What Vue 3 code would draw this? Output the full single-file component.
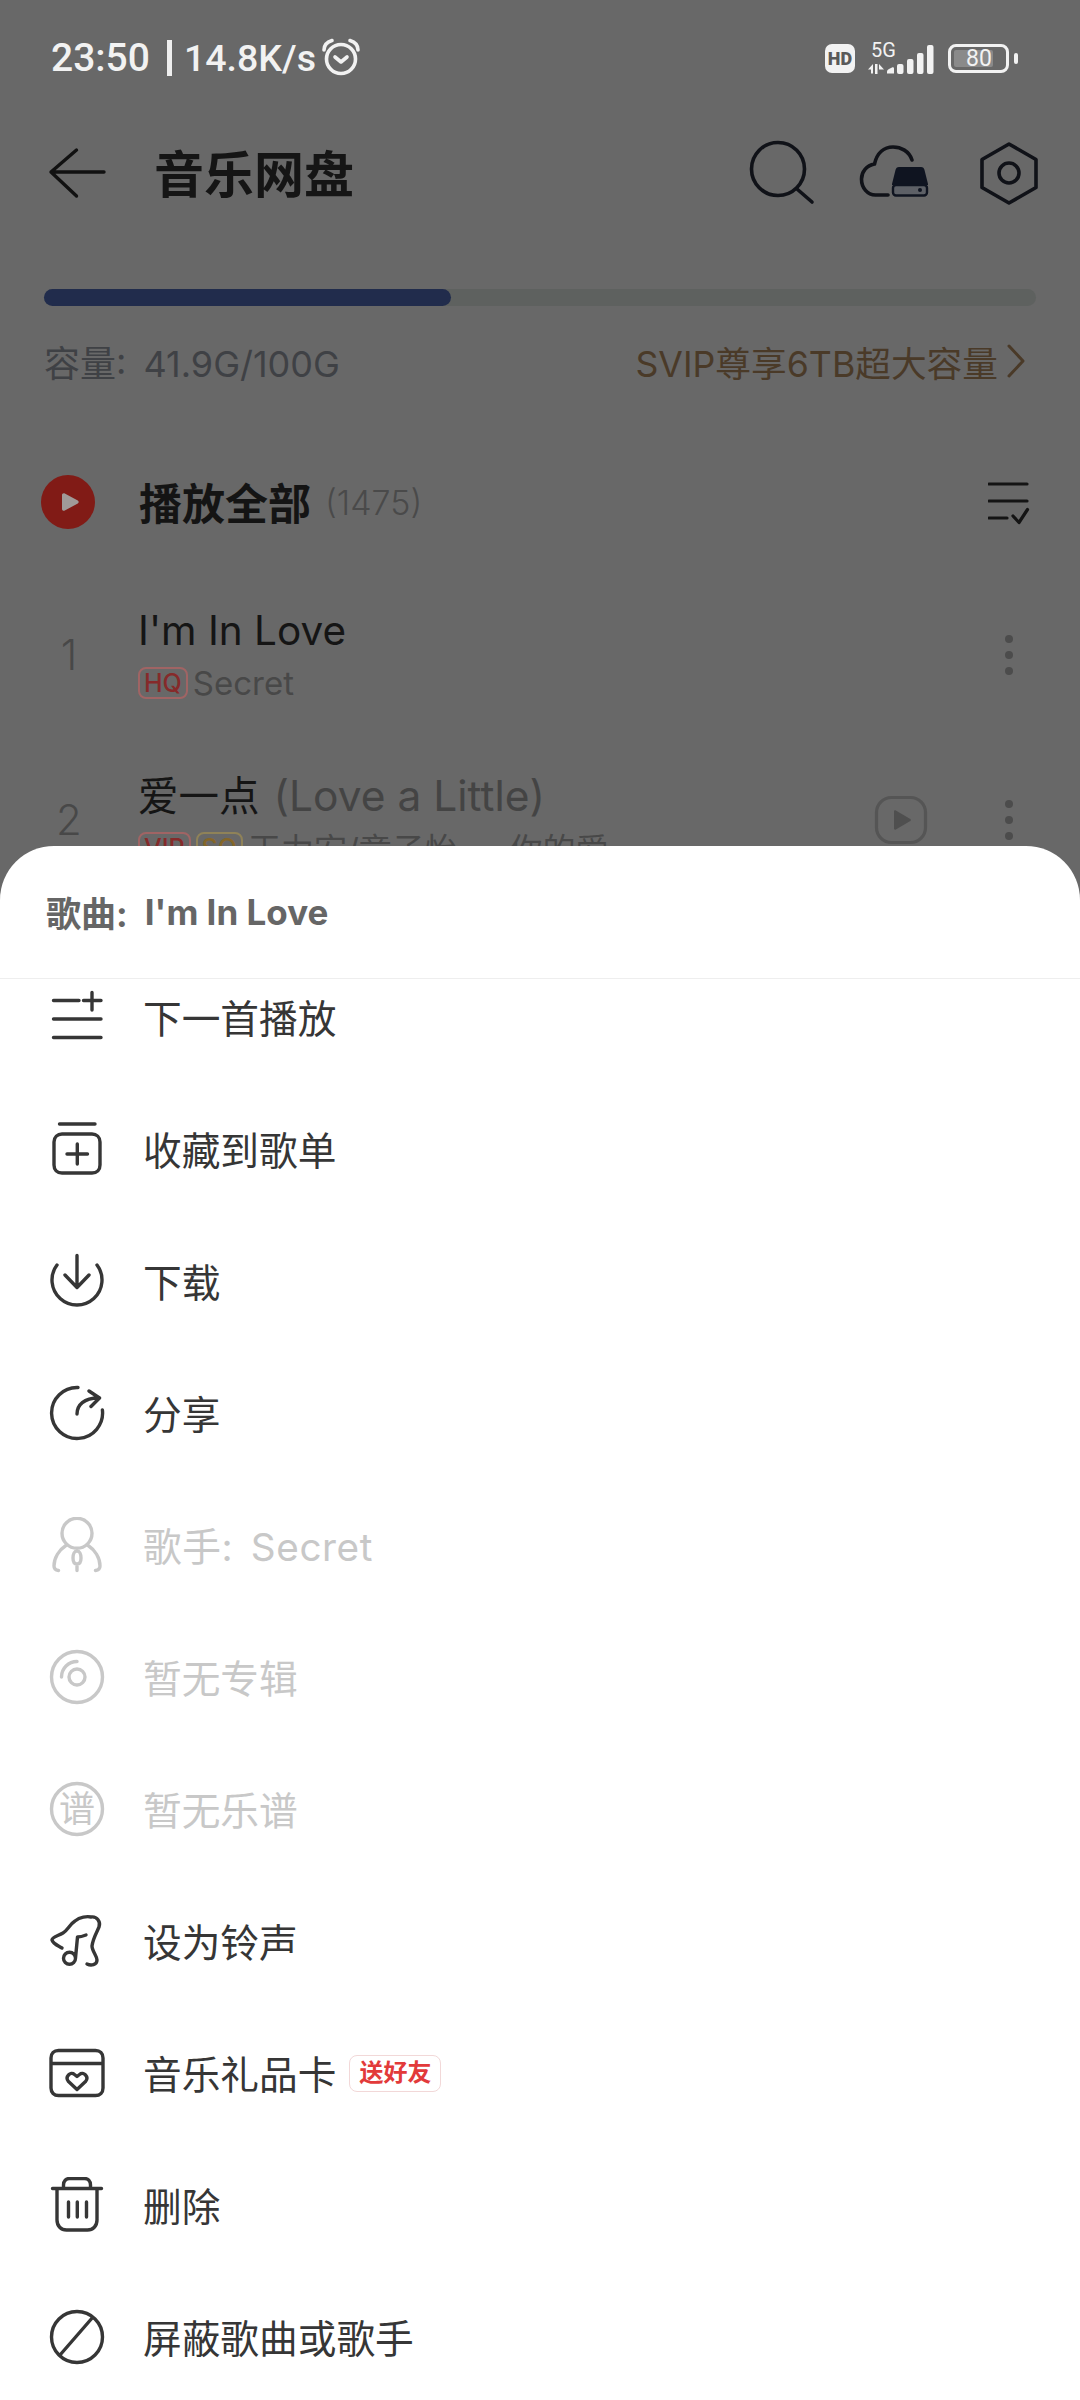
<template>
  <div class="phone">
    <div class="page">
      <!-- status bar -->
      <div class="status">
        <span class="clock">23:50</span>
        <span class="sep"></span>
        <span class="speed">14.8K/s</span>
        <svg class="alarm" viewBox="320 38 44 44" width="44" height="44" fill="none" stroke="#f2f2f2" stroke-width="3.6" stroke-linecap="round" stroke-linejoin="round">
          <circle cx="342" cy="61" r="14.5" />
          <path d="M336 59l6 5 6-5M325 52c0-5 3-8 8-9.500M359 52c0-5-3-8-8-9.500" />
        </svg>
        <div class="status-right">
          <span class="hd">HD</span>
          <svg class="signal" viewBox="865 36 70 40" width="70" height="40">
            <text x="871" y="56.500" class="net">5G</text>
            <path d="M868 69.500l5-5.500v9.500h-2v-4zM875 64h2.500v10H875zM879 64l5 5.500h-5z" fill="#f2f2f2" />
            <path d="M887 73.500v-2c0-1 1-2 2-2.500l3-1.500c1-.5 2 0 2 1v5z" fill="#f2f2f2" />
            <rect x="897" y="64" width="6.500" height="10" rx="2" fill="#f2f2f2" />
            <rect x="907" y="59" width="6.500" height="15" rx="2" fill="#f2f2f2" />
            <rect x="917" y="53" width="6.500" height="21" rx="2" fill="#f2f2f2" />
            <rect x="927" y="45" width="6.500" height="29" rx="2" fill="#f2f2f2" />
          </svg>
          <div class="battery">
            <div class="battery-fill"></div>
            <span class="battery-num">80</span>
          </div>
          <span class="battery-nub"></span>
        </div>
      </div>

      <!-- nav -->
      <div class="nav">
        <svg class="back" viewBox="48 148 60 52" width="60" height="52" fill="none" stroke="#111" stroke-width="3.400" stroke-linecap="round" stroke-linejoin="round">
          <path d="M104 173H51M76.500 151L51 173l25.500 24" />
        </svg>
        <span class="nav-title">音乐网盘</span>
        <svg class="search" viewBox="748 140 68 68" width="68" height="68" fill="none" stroke="#101218" stroke-width="3.600" stroke-linecap="round">
          <circle cx="778" cy="170" r="26.500" />
          <path d="M797 190l15 13" />
        </svg>
        <svg class="cloud" viewBox="856 140 76 60" width="76" height="60">
          <path d="M912 157c-3-9-11-13-19-13-9 0-16 6-18.500 17-8 1.500-13 8-13 15 0 9 6 16 14 16h12.500" fill="none" stroke="#101218" stroke-width="3.600" stroke-linecap="round" />
          <path d="M899 164h22c2 0 3 1 3.500 3l3.500 14v1h-36v-1l3.500-14c.5-2 1.500-3 3.500-3z" fill="#0f1420" />
          <rect x="893" y="182" width="34" height="10.500" rx="3" fill="#5d6066" stroke="#0f1420" stroke-width="2.400" />
          <circle cx="920" cy="187" r="2" fill="#0f1420" />
        </svg>
        <svg class="gear" viewBox="978 140 62 67" width="62" height="67" fill="none" stroke="#101218" stroke-width="3.600" stroke-linejoin="round">
          <path d="M1009 144l27 15.500v28L1009 203l-27-15.500v-28z" />
          <circle cx="1009" cy="173" r="10" />
        </svg>
      </div>

      <!-- capacity -->
      <div class="bar">
        <div class="bar-fill" :style="{ width: usedWidth + 'px' }"></div>
      </div>
      <div class="capacity">
        <span class="cap-used">容量: 41.9G/100G</span>
        <span class="cap-vip">SVIP尊享6TB超大容量</span>
        <svg class="cap-arrow" viewBox="0 0 20 34" width="20" height="34" fill="none" stroke="#4a3a28" stroke-width="3" stroke-linecap="round" stroke-linejoin="round">
          <path d="M3 2l14 15L3 32" />
        </svg>
      </div>

      <!-- play all -->
      <div class="play-all">
        <svg class="play-btn" viewBox="0 0 54 54" width="54" height="54">
          <circle cx="27" cy="27" r="27" fill="#811b16" />
          <path d="M21 20c0-1.500 1.500-2.300 2.800-1.500l13 7c1.200.7 1.200 2.300 0 3l-13 7c-1.300.8-2.800 0-2.800-1.500z" fill="#a09a98" />
        </svg>
        <span class="play-text">播放全部</span>
        <span class="play-count">(1475)</span>
        <svg class="sort" viewBox="988 480 42 46" width="42" height="46" fill="none" stroke="#141414" stroke-width="3.200" stroke-linecap="round" stroke-linejoin="round">
          <path d="M989 485h38M989 502h38M989 519h18M1013 517l6 6.500 8.500-13" />
        </svg>
      </div>

      <!-- songs -->
      <div v-for="song in songs" :key="song.num" class="song">
        <span class="song-num">{{ song.num }}</span>
        <div class="song-body">
          <div class="song-title">{{ song.title }}<span v-if="song.alt" class="song-alt">{{ song.alt }}</span></div>
          <div class="song-sub">
            <span v-for="tag in song.tags" :key="tag.text" class="tag" :class="tag.cls">{{ tag.text }}</span>
            <span class="song-artist">{{ song.artist }}</span>
          </div>
        </div>
        <svg v-if="song.video" class="video" viewBox="0 0 54 50" width="54" height="50" fill="none">
          <rect x="2.500" y="2.500" width="49" height="45" rx="15" stroke="#555" stroke-width="3.200" />
          <path d="M20 16.500v17c0 1 1 1.500 1.800 1l14.500-8.500c.8-.5.8-1.500 0-2l-14.500-8.500c-.8-.5-1.800 0-1.800 1z" fill="#4f4f4f" />
        </svg>
        <div class="dots"><i></i><i></i><i></i></div>
      </div>
    </div>

    <!-- bottom sheet -->
    <div class="sheet">
      <div class="sheet-head"><span>歌曲:</span><span>I'm In Love</span></div>
      <div class="menu">
        <div v-for="item in menu" :key="item.label" class="menu-row" :class="{ off: item.off, wide: item.wide }">
          <svg class="menu-icon" viewBox="0 0 56 56" width="56" height="56" fill="none" stroke="currentColor" stroke-width="3.400" stroke-linecap="round" stroke-linejoin="round">
            <path :d="item.d" />
            <text v-if="item.glyph" x="28" y="40.500" class="glyph">{{ item.glyph }}</text>
          </svg>
          <span class="menu-label">{{ item.label }}</span>
          <span v-if="item.badge" class="badge">{{ item.badge }}</span>
        </div>
      </div>
    </div>
  </div>
</template>

<script setup>
const usedWidth = 407

const songs = [
  {
    num: 1,
    title: "I'm In Love",
    tags: [{ text: 'HQ', cls: 'hq' }],
    artist: 'Secret'
  },
  {
    num: 2,
    title: '爱一点',
    alt: '(Love a Little)',
    tags: [
      { text: 'VIP', cls: 'vip' },
      { text: 'SQ', cls: 'sq' }
    ],
    artist: '王力宏/章子怡 — 你的爱',
    video: true
  }
]

const ring = 'M2.500 28a25.500 25.500 0 1 0 51 0a25.500 25.500 0 1 0 -51 0'

const menu = [
  { label: '下一首播放', d: 'M4.500 11.500H30M34.500 11.500H52M43 3.500V21M4.500 30H52M4.500 48.500H52' },
  { label: '收藏到歌单', d: 'M10.500 3H46M13 13h30c4.500 0 8 3 8 8v23c0 5-3 8-8 8H13c-5 0-8-3-8-8V21c0-5 3.500-8 8-8zM18 33h20.500M28.300 23v20' },
  { label: '下载', d: 'M8 12a25 25 0 1 0 40 0M28 2.500V34M16 22l12 12.500L40 22' },
  { label: '分享', d: 'M29 2.500A25.500 25.500 0 1 0 53.400 25M28 29c0-9 7-16 21.500-16M40 6l10.500 7L42 21.500' },
  { label: '歌手: Secret', off: true, wide: true, d: 'M13 16.300a15 15 0 1 0 30 0a15 15 0 1 0 -30 0M9.500 53.500C6 53 5 51 5 49c0-8 5-16 12.500-21M46.500 53.500C50 53 51 51 51 49c0-8-5-16-12.500-21M24 41c0-4 1.500-7 4-7s4 3 4 7-1.500 6-4 6-4-2-4-6zM28 47v6.500' },
  { label: '暂无专辑', off: true, d: ring + 'M12.500 28A15.500 15.500 0 0 1 28 12.500M20 28a8 8 0 1 0 16 0a8 8 0 1 0 -16 0' },
  { label: '暂无乐谱', off: true, glyph: '谱', d: ring },
  { label: '设为铃声', d: 'M3 27c0-3 6-4 11-7 5-3 7-9 12-12 5-4 12-5 16-4 6-1 10 5 8 10-2 5-6 11-7 19 0 5 5 10 5 14 0 5-6 6-10 4M3 27c1 4 7 6 10 8M14.500 45.300a6 6 0 1 0 12 0a6 6 0 1 0 -12 0M26.500 45l2-21c3 0 6-1 8.500-2' },
  { label: '音乐礼品卡', badge: '送好友', d: 'M9.500 5.500h37c4.500 0 7.500 3 7.500 7.500v30c0 4.500-3 7.500-7.500 7.500h-37C5 50.500 2 47.500 2 43V13c0-4.500 3-7.500 7.500-7.500zM2 18.500h52M28 44.500l-8.500-8c-4-4.500 2-10.500 6-7l2.500 2 2.500-2c4-3.500 10 2.500 6 7z' },
  { label: '删除', d: 'M3.500 11.500h49M14.500 11.500V8c0-4 2.500-6.500 6-6.500h15c3.500 0 6 2.500 6 6.500v3.500M8 11.500V43c0 6 4 10 9.500 10h21C44 53 48 49 48 43V11.500M19.500 25v15M28.300 25v15M37.500 25v15' },
  { label: '屏蔽歌曲或歌手', d: ring + 'M42.700 9.500L11 46' }
]
</script>

<style scoped>
.phone {
  width: 1080px;
  height: 2400px;
  overflow: hidden;
  background: #686868;
  font-family: Inter, "Noto Sans CJK SC", sans-serif;
}

.page {
  height: 846px;
  overflow: hidden;
}

/* status bar */
.status {
  height: 116px;
  display: flex;
  align-items: center;
  padding: 0 62px 0 51px;
  color: #f2f2f2;
  font-family: Roboto, sans-serif;
  font-size: 39px;
  font-weight: 500;
}
.sep {
  width: 5px;
  height: 36px;
  margin: 0 12px 0 17px;
  background: #eee;
}
.speed {
  font-size: 37.500px;
}
.alarm {
  margin-left: 3px;
}
.status-right {
  margin-left: auto;
  display: flex;
  align-items: center;
}
.hd {
  width: 30px;
  height: 29px;
  border-radius: 7px;
  background: #f2f2f2;
  color: #5a5a5a;
  font-size: 18px;
  font-weight: 900;
  line-height: 29px;
  text-align: center;
}
.signal {
  margin: 0 13px 4px 10px;
}
.net {
  fill: #f2f2f2;
  font-family: Roboto, sans-serif;
  font-size: 20px;
  font-weight: 400;
}
.battery {
  position: relative;
  width: 61px;
  height: 29px;
  box-sizing: border-box;
  border: 3px solid #f2f2f2;
  border-radius: 8px;
}
.battery-fill {
  width: 39px;
  height: 17px;
  margin: 3px;
  border-radius: 2px;
  background: #8a8a8a;
}
.battery-num {
  position: absolute;
  left: 15px;
  top: 0;
  font-size: 23px;
  font-weight: 400;
  line-height: 23px;
}
.battery-nub {
  width: 4px;
  height: 11px;
  margin-left: 5px;
  border-radius: 2px;
  background: #f2f2f2;
}

/* nav */
.nav {
  height: 114px;
  display: flex;
  align-items: center;
  padding: 0 40px 0 48px;
}
.nav-title {
  margin: -4px 0 0 46px;
  color: #151515;
  font-size: 50px;
  font-weight: 700;
}
.search {
  margin-left: auto;
}
.cloud {
  margin-left: 40px;
}
.gear {
  margin-left: 46px;
}

/* capacity */
.bar {
  height: 17px;
  margin: 59px 44px 0;
  border-radius: 9px;
  background: #5e615f;
}
.bar-fill {
  height: 17px;
  border-radius: 9px;
  background: #212c4c;
}
.capacity {
  height: 48px;
  margin-top: 31px;
  padding: 0 54px 0 44px;
  display: flex;
  align-items: center;
  font-size: 36px;
}
.cap-used {
  color: #3f4145;
  word-spacing: 7px;
}
.cap-vip {
  margin-left: auto;
  color: #4a3a28;
  font-size: 35.700px;
}
.cap-arrow {
  margin-left: 8px;
}

/* play all */
.play-all {
  height: 64px;
  margin-top: 85px;
  padding: 0 50px 0 41px;
  display: flex;
  align-items: center;
}
.play-text {
  margin: -2px 0 0 44px;
  color: #141414;
  font-size: 43px;
  font-weight: 700;
}
.play-count {
  margin-left: 14px;
  color: #4a4a4a;
  font-size: 34px;
  font-weight: 300;
}
.sort {
  margin-left: auto;
}

/* songs */
.song {
  height: 165px;
  padding-left: 44px;
  display: flex;
  align-items: center;
}
.play-all + .song {
  margin-top: 38px;
}
.song-num {
  width: 50px;
  color: #484848;
  font-size: 42px;
  font-weight: 300;
  text-align: center;
}
.song-body {
  margin-left: 44px;
  flex: 1;
}
.song-title {
  height: 52px;
  line-height: 52px;
  color: #151515;
  font-size: 40.500px;
  font-weight: 400;
  white-space: nowrap;
}
.song-alt {
  margin-left: 14px;
  color: #444;
  font-size: 42.500px;
}
.song-sub {
  height: 44px;
  margin-top: 4px;
  display: flex;
  align-items: center;
  gap: 5px;
  color: #484848;
  font-size: 33px;
  white-space: nowrap;
}
.tag {
  height: 32px;
  box-sizing: border-box;
  padding: 0 4px;
  border: 2px solid;
  border-radius: 8px;
  font-size: 25px;
  font-weight: 500;
  line-height: 28px;
}
.hq,
.vip {
  border-color: #a06464;
  color: #862a2a;
}
.sq {
  border-color: #8f8258;
  color: #856628;
}
.video {
  margin-right: 77px;
}
.dots {
  width: 8px;
  margin-right: 67px;
  display: flex;
  flex-direction: column;
  gap: 8px;
}
.dots i {
  display: block;
  width: 8px;
  height: 8px;
  border-radius: 50%;
  background: #4c4c4c;
}

/* sheet */
.sheet {
  height: 1554px;
  border-radius: 54px 54px 0 0;
  background: #fff;
  overflow: hidden;
}
.sheet-head {
  height: 133px;
  box-sizing: border-box;
  padding: 0 0 1px 46px;
  display: flex;
  align-items: center;
  gap: 17px;
  border-bottom: 1px solid #eeeeee;
  color: #666;
  font-size: 35px;
  font-weight: 700;
}
.menu {
  height: 1421px;
  overflow: hidden;
}
.menu-row {
  height: 132px;
  padding-left: 49px;
  display: flex;
  align-items: center;
  color: #363636;
}
.menu-row:first-child {
  margin-top: -28px;
}
.menu-row.off {
  color: #c8c8c8;
}
.menu-icon {
  flex: none;
}
.menu-label {
  margin: 0 0 2px 38px;
  font-size: 38.700px;
}
.menu-row.wide .menu-label {
  word-spacing: 6px;
  letter-spacing: 0.600px;
}
.glyph {
  fill: currentColor;
  stroke: none;
  font-family: "Noto Sans CJK SC", sans-serif;
  font-size: 36px;
  text-anchor: middle;
}
.badge {
  height: 37px;
  box-sizing: border-box;
  margin-left: 13px;
  padding: 0 9px;
  border: 1px solid #f2d8d8;
  border-radius: 8px;
  color: #e23a3a;
  font-size: 24px;
  font-weight: 700;
  line-height: 34px;
}
</style>
